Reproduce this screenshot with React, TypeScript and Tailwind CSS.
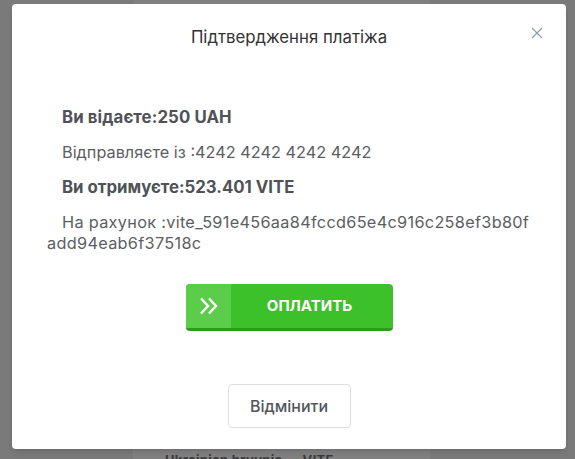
export default function App() {
  return (
    <div className="relative w-[575px] h-[459px] overflow-hidden bg-[#7a7a7a] font-['Inter',sans-serif]">
      {/* фон сторінки під модалкою */}
      <div className="absolute left-[133px] top-0 w-[297px] h-[459px] bg-[#808080]">
        <div className="absolute left-[32px] top-[451px] text-[13px] font-bold text-[#3a3a3a] tracking-wide">
          Ukrainian hryvnia — VITE
        </div>
      </div>

      {/* Модалка */}
      <div className="absolute left-[12px] top-[4px] w-[554px] h-[445px] bg-white rounded-[4px] shadow-md flex flex-col">
        <div className="relative h-[66px] flex items-center justify-center">
          <h2 className="text-[16.8px] text-[#333] pt-[1px]">Підтвердження платіжа</h2>
          <button className="absolute right-[23px] top-[23px] text-[#8e9bbd]">
            <svg width="12" height="12" viewBox="0 0 12 12" stroke="currentColor" strokeWidth="1.2">
              <path d="M1 1l10 10M11 1L1 11" />
            </svg>
          </button>
        </div>

        <div className="pl-[35px] pr-[15px] pt-[37px] flex flex-col gap-[14px] text-[16.3px] leading-[21px] text-[#5b5e63]">
          <p className="pl-[15px] font-bold text-[16.8px] tracking-[0.1px] text-[#4f5257]">Ви відаєте:250 UAH</p>
          <p className="pl-[15px]">Відправляєте із :4242 4242 4242 4242</p>
          <p className="pl-[15px] font-bold text-[16.8px] text-[#4f5257]">Ви отримуєте:523.401 VITE</p>
          <p className="indent-[15px] tracking-[0.3px]">
            <span className="whitespace-nowrap">На рахунок :vite_591e456aa84fccd65e4c916c258ef3b80f</span>
            <br />
            add94eab6f37518c
          </p>
        </div>

        <div className="flex justify-center mt-[30px]">
          <button className="flex w-[207px] h-[47px] rounded-[4px] overflow-hidden border-b-[3px] border-[#2e9a1e] bg-[#3dc12b] text-white">
            <span className="w-[45px] h-full flex items-center justify-center bg-[#5ccd4b]">
              <svg width="19" height="18" viewBox="0 0 19 18" fill="none" stroke="white" strokeWidth="2.4">
                <path d="M2 1.5l7 7.5-7 7.5" />
                <path d="M10 1.5l7 7.5-7 7.5" />
              </svg>
            </span>
            <span className="flex-1 flex items-center justify-center text-[15px] font-bold pr-[4px]">
              ОПЛАТИТЬ
            </span>
          </button>
        </div>

        <div className="flex justify-center mt-[53px]">
          <button className="w-[123px] h-[44px] rounded-[4px] border border-[#dcdde6] text-[16px] font-medium text-[#52565c]">
            Відмінити
          </button>
        </div>
      </div>
    </div>
  );
}
